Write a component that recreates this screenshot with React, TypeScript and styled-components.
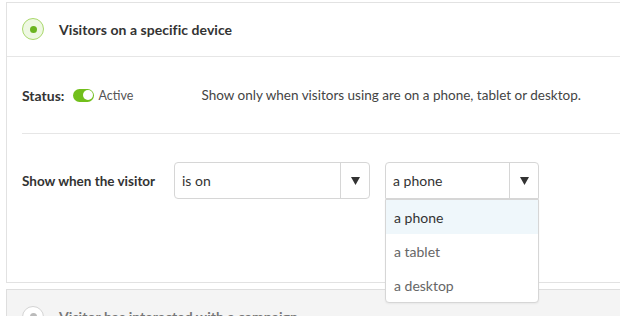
import React from "react";
import styled, { createGlobalStyle } from "styled-components";

const Global = createGlobalStyle`
  html, body { margin: 0; padding: 0; background: #fff; overflow: hidden; }
  body { font-family: Lato, "Open Sans", Arial, sans-serif; color: #333; }
  * { box-sizing: border-box; }
`;

const Page = styled.div`
  padding: 2px 0 0 6px;
  width: 660px;
`;

const Card = styled.div<{ $muted?: boolean }>`
  position: relative;
  border: 1px solid ${(p) => (p.$muted ? "#dedede" : "#e2e2e2")};
  border-right: none;
  background: ${(p) => (p.$muted ? "#f4f4f4" : "#fff")};
  margin-bottom: 6px;
`;

const Header = styled.div<{ $muted?: boolean }>`
  height: 54px;
  display: flex;
  align-items: center;
  padding-left: 15px;
  padding-bottom: 1px;
  gap: 15px;
  border-bottom: ${(p) => (p.$muted ? "none" : "1px solid #e6e6e6")};
`;

const Radio = styled.span<{ $on?: boolean }>`
  width: 22px;
  height: 22px;
  border-radius: 50%;
  border: 1.5px solid ${(p) => (p.$on ? "#a9d86b" : "#d4d4d4")};
  background: ${(p) => (p.$on ? "#eef8e2" : "#fff")};
  display: flex;
  align-items: center;
  justify-content: center;
  flex: none;
  &::after {
    content: "";
    width: 7px;
    height: 7px;
    border-radius: 50%;
    background: ${(p) => (p.$on ? "#6bb420" : "#bbb")};
  }
`;

const Title = styled.div<{ $muted?: boolean }>`
  font-size: 14px;
  font-weight: 700;
  letter-spacing: 0.05px;
  color: ${(p) => (p.$muted ? "#777" : "#333")};
`;

const Body = styled.div`
  padding-left: 15px;
`;

const StatusRow = styled.div`
  height: 77px;
  display: flex;
  align-items: center;
  border-bottom: 1px solid #e6e6e6;
`;

const Label = styled.span`
  font-size: 14px;
  font-weight: 700;
  color: #333;
`;

const Toggle = styled.span`
  margin-left: 9px;
  width: 21px;
  height: 13px;
  border-radius: 7px;
  background: #72bf1c;
  position: relative;
  flex: none;
  &::after {
    content: "";
    position: absolute;
    right: 1.5px;
    top: 1.5px;
    width: 10px;
    height: 10px;
    border-radius: 50%;
    background: #fff;
  }
`;

const StateText = styled.span`
  margin-left: 4px;
  font-size: 12.5px;
  color: #555;
  width: 103px;
`;

const Desc = styled.span`
  font-size: 13.5px;
  color: #444;
`;

const ConditionRow = styled.div`
  display: flex;
  align-items: center;
  padding: 28px 0 83px;
`;

const CondLabel = styled(Label)`
  width: 152px;
  flex: none;
  font-size: 13.5px;
`;

const SelectWrap = styled.div<{ $w: number; $open?: boolean }>`
  position: relative;
  width: ${(p) => p.$w}px;
  margin-right: 15px;
  height: 37px;
  border: 1px solid #d6d6d6;
  border-radius: ${(p) => (p.$open ? "4px 4px 0 0" : "4px")};
  display: flex;
  align-items: stretch;
  background: #fff;
`;

const SelectValue = styled.div`
  flex: 1;
  display: flex;
  align-items: center;
  padding-left: 7px;
  font-size: 14px;
  color: #333;
`;

const Arrow = styled.div`
  width: 29px;
  border-left: 1px solid #d6d6d6;
  display: flex;
  align-items: center;
  justify-content: center;
  color: #333;
`;

const Menu = styled.div`
  position: absolute;
  left: -1px;
  right: -1px;
  top: 36px;
  background: #fff;
  border: 1px solid #d6d6d6;
  border-radius: 0 0 4px 4px;
  z-index: 5;
  box-shadow: 0 1px 2px rgba(0, 0, 0, 0.05);
`;

const Option = styled.div<{ $active?: boolean }>`
  height: 34px;
  display: flex;
  align-items: center;
  padding-left: 8px;
  font-size: 14px;
  color: ${(p) => (p.$active ? "#333" : "#666")};
  background: ${(p) => (p.$active ? "#eff7fb" : "transparent")};
`;

const Tri = () => (
  <svg width="9" height="8" viewBox="0 0 9 8">
    <path d="M0 0 H9 L4.5 8 Z" fill="#333" />
  </svg>
);

export default function App() {
  return (
    <>
      <Global />
      <Page>
        <Card>
          <Header>
            <Radio $on />
            <Title>Visitors on a specific device</Title>
          </Header>
          <Body>
            <StatusRow>
              <Label>Status:</Label>
              <Toggle />
              <StateText>Active</StateText>
              <Desc>Show only when visitors using are on a phone, tablet or desktop.</Desc>
            </StatusRow>
            <ConditionRow>
              <CondLabel>Show when the visitor</CondLabel>
              <SelectWrap $w={196}>
                <SelectValue>is on</SelectValue>
                <Arrow>
                  <Tri />
                </Arrow>
              </SelectWrap>
              <SelectWrap $w={154} $open>
                <SelectValue>a phone</SelectValue>
                <Arrow>
                  <Tri />
                </Arrow>
                <Menu>
                  <Option $active>a phone</Option>
                  <Option>a tablet</Option>
                  <Option>a desktop</Option>
                </Menu>
              </SelectWrap>
            </ConditionRow>
          </Body>
        </Card>
        <Card $muted>
          <Header $muted>
            <Radio />
            <Title $muted>Visitor has interacted with a campaign</Title>
          </Header>
        </Card>
      </Page>
    </>
  );
}
